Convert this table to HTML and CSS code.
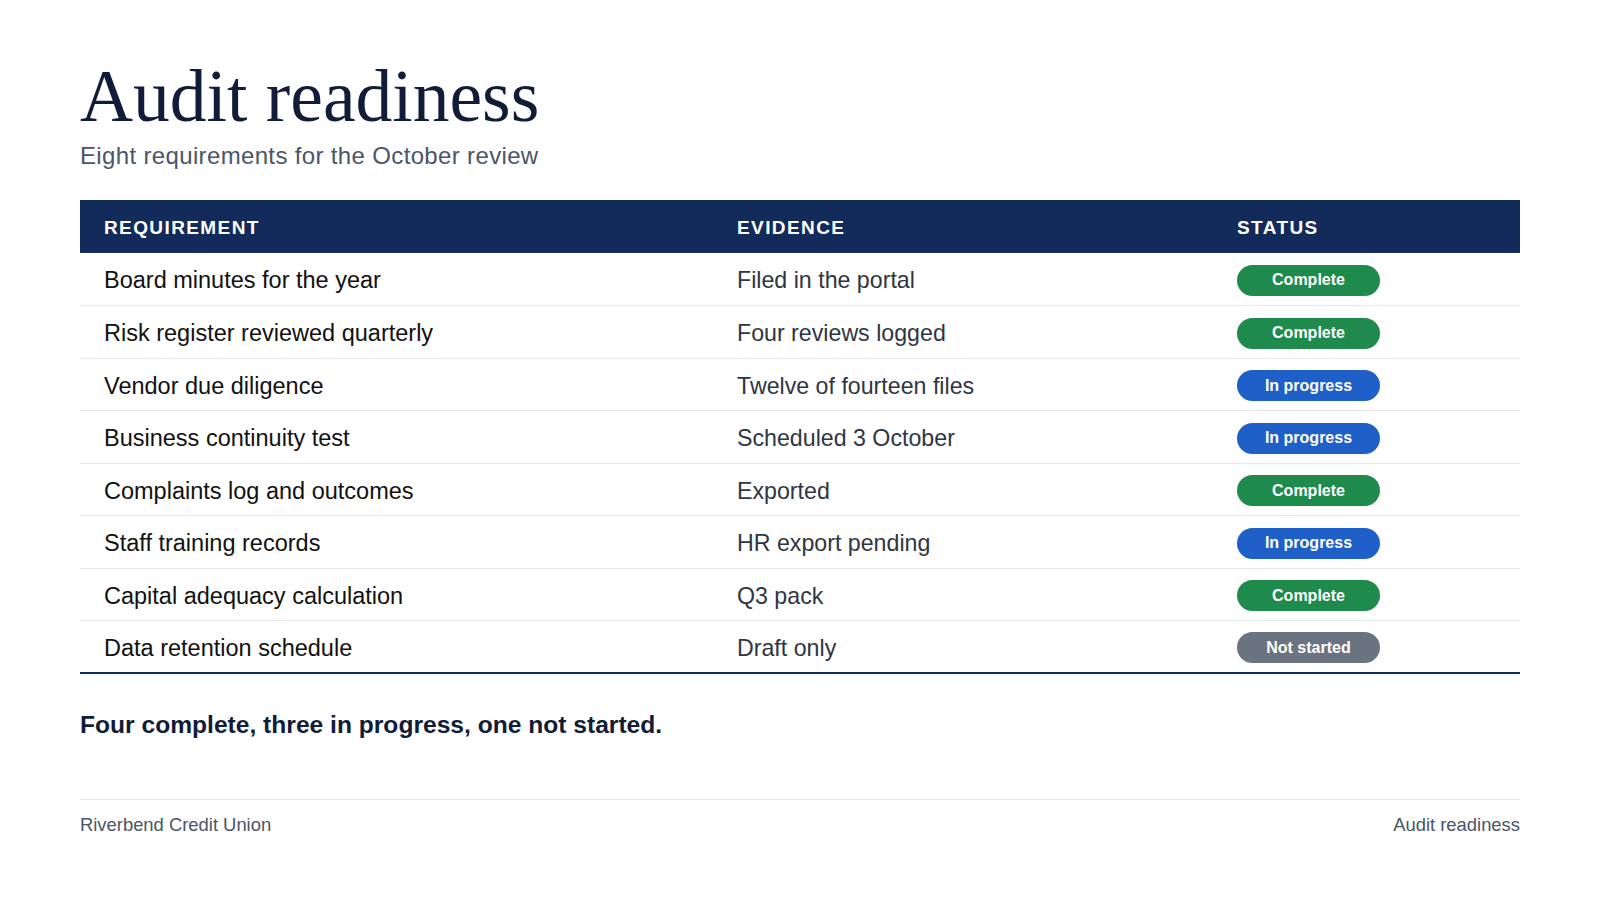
FILE: index.html
```html
<!DOCTYPE html>
<html lang="en">
<head>
<meta charset="utf-8">
<title>Audit readiness</title>
<link rel="stylesheet" href="styles.css">
</head>
<body>
<main class="page">
  <header class="intro">
    <h1 class="title">Audit readiness</h1>
    <p class="subtitle">Eight requirements for the October review</p>
  </header>

  <table class="grid">
    <colgroup>
      <col class="col-req">
      <col class="col-ev">
      <col class="col-st">
    </colgroup>
    <thead>
      <tr>
        <th>Requirement</th>
        <th>Evidence</th>
        <th>Status</th>
      </tr>
    </thead>
    <tbody>
      <tr>
        <td class="req">Board minutes for the year</td>
        <td class="ev">Filed in the portal</td>
        <td><span class="badge badge-done">Complete</span></td>
      </tr>
      <tr>
        <td class="req">Risk register reviewed quarterly</td>
        <td class="ev">Four reviews logged</td>
        <td><span class="badge badge-done">Complete</span></td>
      </tr>
      <tr>
        <td class="req">Vendor due diligence</td>
        <td class="ev">Twelve of fourteen files</td>
        <td><span class="badge badge-prog">In progress</span></td>
      </tr>
      <tr>
        <td class="req">Business continuity test</td>
        <td class="ev">Scheduled 3 October</td>
        <td><span class="badge badge-prog">In progress</span></td>
      </tr>
      <tr>
        <td class="req">Complaints log and outcomes</td>
        <td class="ev">Exported</td>
        <td><span class="badge badge-done">Complete</span></td>
      </tr>
      <tr>
        <td class="req">Staff training records</td>
        <td class="ev">HR export pending</td>
        <td><span class="badge badge-prog">In progress</span></td>
      </tr>
      <tr>
        <td class="req">Capital adequacy calculation</td>
        <td class="ev">Q3 pack</td>
        <td><span class="badge badge-done">Complete</span></td>
      </tr>
      <tr>
        <td class="req">Data retention schedule</td>
        <td class="ev">Draft only</td>
        <td><span class="badge badge-none">Not started</span></td>
      </tr>
    </tbody>
  </table>

  <p class="summary">Four complete, three in progress, one not started.</p>

  <footer class="footer">
    <span>Riverbend Credit Union</span>
    <span>Audit readiness</span>
  </footer>
</main>
</body>
</html>
```

FILE: styles.css
```css
* {
  box-sizing: border-box;
}

html, body {
  margin: 0;
  padding: 0;
  background: #ffffff;
}

body {
  font-family: "Liberation Sans", Arial, sans-serif;
  color: #111827;
}

.page {
  width: 1600px;
  height: 900px;
  padding: 60px 80px 0;
  display: flex;
  flex-direction: column;
}

.intro {
  display: flex;
  flex-direction: column;
}

.title {
  margin: 0;
  font-family: "Liberation Serif", "Times New Roman", serif;
  font-weight: 400;
  font-size: 73.5px;
  line-height: 1;
  color: #101c38;
}

.subtitle {
  margin: 8px 0 0;
  font-size: 24px;
  line-height: 1.2;
  letter-spacing: 0.35px;
  color: #4a5568;
}

.grid {
  margin-top: 30px;
  width: 1440px;
  border-collapse: collapse;
  table-layout: fixed;
}

.col-req { width: 633px; }
.col-ev { width: 500px; }
.col-st { width: 307px; }

.grid thead th {
  background: #132b5b;
  color: #ffffff;
  text-align: left;
  font-weight: 700;
  font-size: 19px;
  letter-spacing: 1.4px;
  text-transform: uppercase;
  height: 53px;
  padding: 2px 0 0 24px;
  vertical-align: middle;
}

.grid tbody td {
  height: 52.5px;
  padding: 3px 0 0 24px;
  vertical-align: middle;
  border-bottom: 1px solid #e6e8ec;
  font-size: 23.5px;
}

.grid tbody tr:last-child td {
  border-bottom: 2px solid #132b5b;
}

.req {
  color: #111111;
}

.grid tbody td.ev {
  color: #2f3542;
  font-size: 23.2px;
}

.badge {
  display: inline-flex;
  align-items: center;
  justify-content: center;
  width: 143px;
  height: 31px;
  margin-top: -1px;
  border-radius: 16px;
  color: #ffffff;
  font-weight: 700;
  font-size: 16px;
  vertical-align: middle;
}

.badge-done { background: #1e8a4c; }
.badge-prog { background: #1f5fc8; }
.badge-none { background: #6b7280; }

.summary {
  margin: 36px 0 0;
  font-size: 24.6px;
  font-weight: 700;
  line-height: 1.2;
  color: #101c38;
}

.footer {
  margin-top: 59px;
  border-top: 1px solid #e6e8ec;
  padding-top: 14px;
  display: flex;
  justify-content: space-between;
  font-size: 18.4px;
  line-height: 1.2;
  color: #4a5568;
}
```
